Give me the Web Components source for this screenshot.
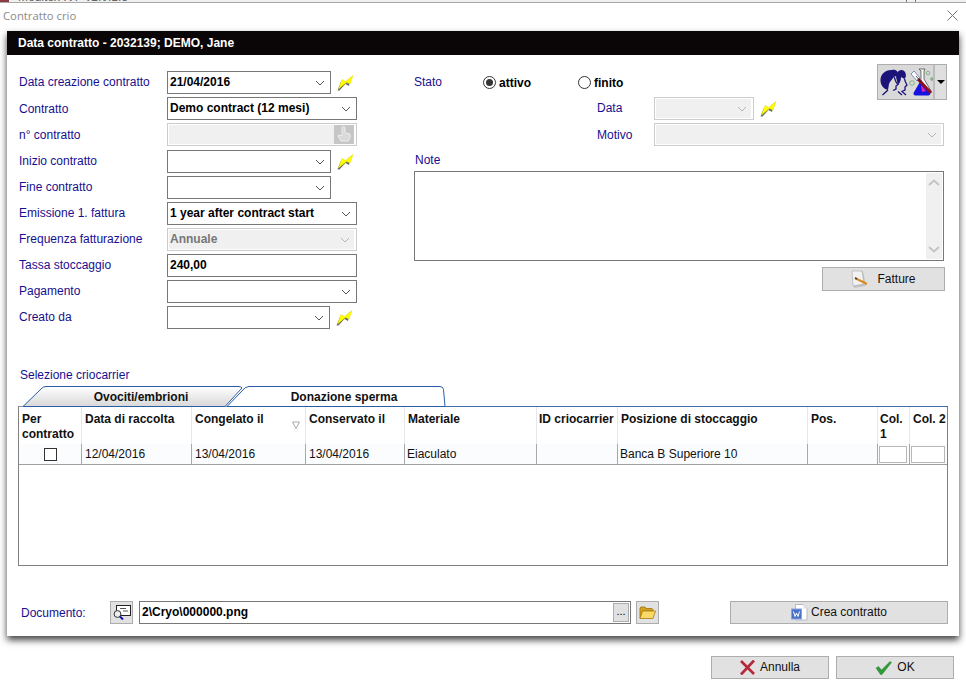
<!DOCTYPE html>
<html lang="it"><head><meta charset="utf-8"><title>Contratto crio</title>
<style>html,body{margin:0;background:#fff}body{font:12px "Liberation Sans",Arial,sans-serif}</style>
</head><body>
<crio-app></crio-app>
<script>
const ICONS={
bolt:`<svg width="17" height="16" viewBox="0 0 17 16"><path d="M0.500 15.500L4 7L7.500 9L14 2L12 11L8.500 9L2.500 15.500Z" fill="#444" opacity=".8"/><path d="M1.500 14L5 4.500L8.500 6.500L16 .5L13 9L9.500 7.500Z" fill="#ffff00" stroke="#e0d800" stroke-width=".5"/></svg>`,
people:`<svg width="56" height="36" viewBox="0 0 56 36"><g fill="#1c1478"><path d="M2.500 17C2 10 8 5.500 14 6C18 5 21 8 20 12L16 12.500C14 16 12 17 11 20L10 26C6 25 3 22 2.500 17Z"/><path d="M19 9C21 5 26 5 27.500 9C28.500 12 27.500 14 26.500 15L23 13C23 16 22 19 20 21L18 13Z"/></g>
<path d="M16 12.500L18 18L20 20.500L18 22L18 25L15 26.500M10 26L4.500 31M24 31L20 27.500M26.500 15L27.500 18L29 21L27 23L27 26L24 27.500L28 31" fill="none" stroke="#1c1478" stroke-width="1.300"/><circle cx="34" cy="19" r="2.300" fill="none" stroke="#7fb47f"/><circle cx="50" cy="9" r="1.800" fill="none" stroke="#7fb47f"/><circle cx="54" cy="15" r="1.200" fill="none" stroke="#5f9a5f"/><path fill="#fff" stroke="#333" stroke-width=".7" d="M41 5H47L46 7V15L53 27L41 27L43 15V7Z"/><path fill="#1414e0" d="M43 16L35.500 29C35 31 37 31.500 38 31.500H50C52 31.500 52.500 30 52 29L46 20Z"/><path fill="#e020c0" d="M43 21L48 27L44 28Z"/><path fill="#fff" stroke="#5577aa" stroke-width=".8" d="M33 10L36 7L42 14L39 17Z"/><path d="M40 15L53 29" stroke="#8c1020" stroke-width="3"/><path d="M38 12L43 18" stroke="#222" stroke-width=".8"/></svg>`,
paper:`<svg width="20" height="19" viewBox="0 0 20 19"><path fill="#c4c4c4" d="M2 1H12L15 16L3 18Z"/><path fill="#f2f2f2" stroke="#a8a8a8" stroke-width=".6" d="M1 1H11L13 14L2 16Z"/><path d="M4 8L16 14" stroke="#d98a20" stroke-width="2"/><path d="M4 8L6 9" stroke="#444" stroke-width="1.500"/></svg>`,
word:`<svg width="17" height="17" viewBox="0 0 17 17"><path fill="#fff" stroke="#b8b8c4" d="M4.500 .5H12L16 4.500V16H4.500Z"/><path fill="#e8e8ee" d="M12 .5V4.500H16Z"/><rect x="0.500" y="5" width="10" height="10" fill="#4a70c8" stroke="#8aa4e0"/><path d="M2.500 7.500L4 12.500L5.500 9L7 12.500L8.500 7.500" fill="none" stroke="#fff" stroke-width="1"/></svg>`,
folder:`<svg width="17" height="13" viewBox="0 0 17 13"><path fill="#d9a21c" stroke="#9a7410" stroke-width=".8" d="M1 12V2L2 1H6L7 2.500H13L14 3.500V5H4L1 12Z"/><path fill="#fbd968" stroke="#a67c12" stroke-width=".8" d="M1 12.500L3.600 5H16.500L14 12.500Z"/></svg>`,
cross:`<svg width="15" height="15" viewBox="0 0 15 15"><path d="M1 1L14 14M14 .5L1 14.500" stroke="#b4293c" stroke-width="2.700"/></svg>`,
check:`<svg width="17" height="14" viewBox="0 0 17 14"><path d="M1 7L3.500 5.500L6.500 9L15 .5L16.500 1.500L7 13.500H5.500Z" fill="#2f9a3a" stroke="#1f7a2c" stroke-width=".4"/></svg>`,
viewer:`<svg width="18" height="15" viewBox="0 0 18 15"><rect x="3.500" y=".5" width="14" height="10" fill="#fff" stroke="#222"/><path d="M7 3.500H13M10 6H15" stroke="#555"/><circle cx="4.500" cy="9" r="3.400" fill="#eee" stroke="#333"/><path d="M7 11.500L10 14.500" stroke="#1414a0" stroke-width="2"/></svg>`,
finger:`<svg width="18" height="18" viewBox="0 0 18 18"><path fill="#d8d8d8" stroke="#eeeeee" d="M7 2.500C7 1 10 1 10 2.500V8L15 9V13L13 16H6L3 11L4 10L7 11Z"/></svg>`
};
const chev=c=>`<svg width="10" height="6" viewBox="0 0 10 6"><path d="M1 1L5 5L9 1" fill="none" stroke="${c}" stroke-width="1"/></svg>`;
function reg(name,css,html){customElements.define(name,class extends HTMLElement{
  connectedCallback(){if(this.shadowRoot)return;const r=this.attachShadow({mode:'open'});
    r.innerHTML=`<style>${css}</style>`+(typeof html==='function'?html(this):html);}
});}
reg('crio-icon',':host{display:inline-flex;flex:none;align-items:center;justify-content:center}svg{display:block}',e=>ICONS[e.getAttribute('name')]);
reg('crio-label',':host{display:block;color:#170f8f;font-size:12px;line-height:14px;white-space:nowrap}','<slot></slot>');
reg('crio-combo',`:host{display:flex;align-items:center;box-sizing:border-box;height:23px;border:1px solid #777;background:#fff;color:#000;font-weight:bold;font-size:12px;padding-left:1px;padding-right:5px;flex:none;white-space:nowrap}
 :host([disabled]){border-color:#ccc;padding:1px 2px 1px 1px;color:#777}
 .i{flex:1;display:flex;align-items:center;height:100%;padding-left:1px}
 :host([disabled]) .i{background:#f0f0f0;padding-left:1px;padding-right:4px}
 span{flex:1;padding-bottom:1px}svg{display:block;margin-right:0}`,
 e=>`<div class="i"><span><slot></slot></span>${e.hasAttribute('nochev')?'':chev(e.hasAttribute('disabled')?'#b4b4b4':'#555')}</div>`);
reg('crio-radio',`:host{display:flex;align-items:center;gap:3px;font-weight:bold;color:#000;font-size:12px}
 i{box-sizing:border-box;width:13px;height:13px;border:1px solid #333;border-radius:50%;display:flex;align-items:center;justify-content:center}
 b{width:7px;height:7px;border-radius:50%;background:#333}`,
 e=>`<i>${e.hasAttribute('checked')?'<b></b>':''}</i><slot></slot>`);
reg('crio-button',`:host{display:flex;align-items:center;justify-content:center;gap:5px;box-sizing:border-box;height:23px;background:#e1e1e1;border:1px solid #adadad;color:#111;font-size:12px;flex:none;white-space:nowrap}
 ::slotted(span){margin-top:-2px}`,'<slot></slot>');
reg('crio-row',`:host{display:flex;align-items:center;height:23px;gap:6px}
 ::slotted(crio-label){width:142px}
 :host([up]) ::slotted(crio-label){margin-top:-2px}`,'<slot></slot>');
reg('crio-form-left',`:host{display:flex;flex-direction:column;gap:3px;width:407px;flex:none;box-sizing:border-box;padding:16px 0 0 12px}
 ::slotted(.gap){margin-top:1px}`,'<slot></slot>');
reg('crio-form-right',`:host{display:flex;flex-direction:column;width:534px;flex:none;padding-top:16px;position:relative}
 .r{display:flex;align-items:center;height:23px;margin-bottom:3px}
 .sub{padding-left:183px}
 .sub crio-label{width:57px}
 .st{width:69px}
 .up{margin-top:-2px}
 .att{width:95px}
 .split{margin-left:auto;margin-right:1px;margin-top:-7px;align-self:flex-start;height:36px;box-sizing:border-box;width:70px;display:flex;background:#d9d9d9;border:1px solid #adadad;flex:none}
 .split .a{width:55px;display:flex;align-items:center;justify-content:center}
 .split .b{flex:1;border-left:2px solid #bcbcbc;display:flex;align-items:center;justify-content:center;background:#dfdfdf}
 .tri{width:0;height:0;border:4px solid transparent;border-top:4px solid #000;border-bottom:0}
 .note{margin-top:4px;margin-bottom:4px;height:14px;padding-left:1px}
 .ta{box-sizing:border-box;width:530px;height:90px;border:1px solid #777;display:flex;justify-content:flex-end;padding:1px}
 .sb{width:16px;background:#f0f0f0;display:flex;flex-direction:column;justify-content:space-between;align-items:center;padding:6px 0;margin-right:0}
 .f{margin:6px 0 0 408px;width:123px;height:24px;gap:6px}
 .ct{margin-left:6px}`,
 ()=>`<div class="r"><crio-label class="st up">Stato</crio-label><crio-radio class="att" checked>attivo</crio-radio><crio-radio>finito</crio-radio>
   <div class="split"><div class="a"><crio-icon name="people"></crio-icon></div><div class="b"><div class="tri"></div></div></div></div>
  <div class="r sub"><crio-label class="up">Data</crio-label><crio-combo disabled style="width:100px"></crio-combo><crio-icon class="ct" name="bolt"></crio-icon></div>
  <div class="r sub"><crio-label>Motivo</crio-label><crio-combo disabled style="width:290px"></crio-combo></div>
  <crio-label class="note">Note</crio-label>
  <div class="ta"><div class="sb"><svg width="12" height="7" viewBox="0 0 12 7" style="transform:scaleY(-1)"><path d="M1 1L6 5.500L11 1" fill="none" stroke="#c4c4c4" stroke-width="2"/></svg><svg width="12" height="7" viewBox="0 0 12 7"><path d="M1 1L6 5.500L11 1" fill="none" stroke="#c4c4c4" stroke-width="2"/></svg></div></div>
  <crio-button class="f"><crio-icon name="paper"></crio-icon>Fatture</crio-button>`);
reg('crio-tabs',`:host{display:block;position:relative;height:20px;width:930px;z-index:1}
 svg{position:absolute;left:0;top:0}
 .t{position:relative;display:flex;height:22px;align-items:center;font-weight:bold;font-size:12px;color:#111;text-align:center}
 .a{margin-left:5px;width:236px}.b{width:170px}`,
 `<svg width="930" height="21" viewBox="0 0 930 21"><defs><linearGradient id="g" x1="0" y1="0" x2="0" y2="1"><stop offset="0" stop-color="#fff"/><stop offset="1" stop-color="#d8d8d8"/></linearGradient></defs>
 <path d="M5 20.500L23 3Q25 .5 28 .5H221Q223 .5 224 2L207 20.500Z" fill="url(#g)" stroke="#2a5ca8"/>
 <path d="M209 20.500L224 5Q227 .5 231 .5H422Q425 .5 425.500 3.500L427 20.500Z" fill="#fff" stroke="#2a5ca8"/>
 <path d="M427 20.500H930" stroke="#3f6ca8"/></svg>
 <div class="t"><span class="a">Ovociti/embrioni</span><span class="b">Donazione sperma</span></div>`);
reg('crio-table',`:host{display:block;box-sizing:border-box;width:930px;height:160px;border:1px solid #808080;border-top:0;background:#fff;color:#111;font-size:12px}
 .g{display:grid;grid-template-columns:62px 110px 114px 99px 132px 81px 190px 70px 32px 38px;grid-template-rows:37px 20px;border-bottom:1px solid #a0a0a0;border-top:1px solid #8a96a8;margin-top:0}
 .h{position:relative;box-sizing:border-box;padding:5px 0 0 3px;font-weight:bold;line-height:15px;border-left:1px solid #e6e6e6}
 .h:first-child{border-left:0;padding-left:3px}
 .h.t{padding-left:2px}
 .c{box-sizing:border-box;padding-left:3px;line-height:20px;background:#fafcfe;border-left:1px solid #a8a8a8;white-space:nowrap;display:flex;align-items:center}
 .c.l{padding-left:2px}
 .c:nth-child(11){border-left:0;justify-content:center;padding:0}
 .ck{width:13px;height:13px;box-sizing:border-box;border:1px solid #333;background:#fff;margin-left:0}
 .in{box-sizing:border-box;height:17px;border:1px solid #b8b8b8;background:#fff;flex:1;margin-right:2px}
 .c.n{padding-left:1px}
 .nw{white-space:nowrap}
 .s{position:absolute;right:5px;top:14px}`,
 ()=>{const H=['Per contratto','Data di raccolta','Congelato il','Conservato il','Materiale','ID criocarrier','Posizione di stoccaggio','Pos.','Col. 1','Col. 2'];
  const R=['','12/04/2016','13/04/2016','13/04/2016','Eiaculato','','Banca B Superiore 10','','',''];
  let s='<div class="g">';
  H.forEach((t,i)=>{s+=`<div class="h ${(i==5||i==9)?'nw':''} ${(i==5||i==8)?'t':''}">${t}${i==2?'<svg class="s" width="8" height="8" viewBox="0 0 8 8"><path d="M.5 1H7.500L4 7.500Z" fill="none" stroke="#a8a8a8"/></svg>':''}</div>`;});
  R.forEach((t,i)=>{let inner=t;if(i==0)inner='<div class="ck"></div>';if(i>=8)inner='<div class="in"></div>';s+=`<div class="c ${i>=8?'n':''} ${(i==4||i==6)?'l':''}">${inner}</div>`;});
  return s+'</div>';});
reg('crio-doc',`:host{display:flex;align-items:center;height:23px;padding-left:14px;margin-top:35px}
 crio-label{width:89px}
 .f{box-sizing:border-box;width:492px;height:23px;margin:0 5px 0 6px;border:1px solid #777;display:flex;align-items:center;padding:1px 1px 1px 2px;font-weight:bold;color:#000;justify-content:space-between}
 .f span{padding-bottom:2px}
 .d{box-sizing:border-box;width:16px;height:19px;background:#e1e1e1;border:1px solid #adadad;display:flex;align-items:center;justify-content:center;font-weight:normal;font-size:11px;padding-bottom:3px}
 .sq{width:23px}.cr{width:218px;margin-left:71px;gap:3px}`,
 `<crio-label>Documento:</crio-label><crio-button class="sq"><crio-icon name="viewer"></crio-icon></crio-button>
  <div class="f"><span>2\\Cryo\\000000.png</span><div class="d">...</div></div>
  <crio-button class="sq"><crio-icon name="folder"></crio-icon></crio-button>
  <crio-button class="cr"><crio-icon name="word"></crio-icon><span>Crea contratto</span></crio-button>`);
reg('crio-dialog',`:host{display:block;box-sizing:border-box;width:952px;height:605px;margin-left:7px;background:#fff;box-shadow:0 4px 7px rgba(0,0,0,.75)}
 .hd{height:24px;background:#0a0608;color:#fff;font-weight:bold;font-size:12px;line-height:24px;padding-left:11px}
 .form{display:flex;height:313px}
 .sel{display:block;margin-left:13px;height:14px;margin-bottom:4px}
 .tb{margin-left:11px}`,
 `<div class="hd">Data contratto - 2032139; DEMO, Jane</div>
 <div class="form"><crio-form-left>
  <crio-row up><crio-label>Data creazione contratto</crio-label><crio-combo style="width:164px">21/04/2016</crio-combo><crio-icon name="bolt"></crio-icon></crio-row>
  <crio-row><crio-label>Contratto</crio-label><crio-combo style="width:190px">Demo contract (12 mesi)</crio-combo></crio-row>
  <crio-row><crio-label>n° contratto</crio-label><crio-combo disabled nochev style="width:190px;"><div style="display:flex;justify-content:flex-end;margin-right:-4px"><div style="width:20px;height:19px;background:#c6c6c6;display:flex;align-items:center;justify-content:center;margin:1px 0"><crio-icon name="finger"></crio-icon></div></div></crio-combo></crio-row>
  <crio-row class="gap" up><crio-label>Inizio contratto</crio-label><crio-combo style="width:164px"></crio-combo><crio-icon name="bolt"></crio-icon></crio-row>
  <crio-row up><crio-label>Fine contratto</crio-label><crio-combo style="width:164px"></crio-combo></crio-row>
  <crio-row up><crio-label>Emissione 1. fattura</crio-label><crio-combo style="width:190px">1 year after contract start</crio-combo></crio-row>
  <crio-row up><crio-label>Frequenza fatturazione</crio-label><crio-combo disabled style="width:190px">Annuale</crio-combo></crio-row>
  <crio-row up><crio-label>Tassa stoccaggio</crio-label><crio-combo nochev style="width:190px">240,00</crio-combo></crio-row>
  <crio-row up><crio-label>Pagamento</crio-label><crio-combo style="width:190px"></crio-combo></crio-row>
  <crio-row up><crio-label>Creato da</crio-label><crio-combo style="width:163px"></crio-combo><crio-icon name="bolt"></crio-icon></crio-row>
 </crio-form-left><crio-form-right></crio-form-right></div>
 <crio-label class="sel">Selezione criocarrier</crio-label>
 <crio-tabs class="tb"></crio-tabs>
 <crio-table class="tb"></crio-table>
 <crio-doc></crio-doc>`);
reg('crio-titlebar',`:host{display:block}
 .top{height:3px;box-sizing:border-box;border-bottom:1px solid #a8a8a8;overflow:hidden;display:flex;color:#666;font-size:12px;line-height:12px;background:#f0f0f0}
 .top i{width:9px;height:2px;background:#8c3a44;flex:none}
 .top span{margin:-9px 0 0 9px;white-space:nowrap;flex:1}
 .top b{width:1px;height:2px;background:#777;flex:none;margin-right:8px}
 .top b+b{margin-right:50px}
 .t{display:flex;justify-content:space-between;align-items:center;box-sizing:border-box;height:28px;padding:0 8px 4px 3px;color:#8a8a8a;font:11.3px "Open Sans","Liberation Sans",sans-serif}
 svg{display:block}`,
 `<div class="top"><i></i><span>Meditex IVF v2.0.1.3</span><b></b><b></b></div>
  <div class="t"><span>Contratto crio</span><svg width="11" height="11" viewBox="0 0 11 11"><path d="M.5 .5L10.500 10.500M10.500 .5L.5 10.500" stroke="#777" stroke-width="1"/></svg></div>`);
reg('crio-app',`:host{display:block;width:966px;height:689px;overflow:hidden;position:relative}
 .ft{display:flex;justify-content:flex-end;gap:7px;padding:20px 12px 0 0}
 crio-button{width:118px}`,
 `<crio-titlebar></crio-titlebar><crio-dialog></crio-dialog>
 <div class="ft"><crio-button><crio-icon name="cross"></crio-icon><span>Annulla</span></crio-button><crio-button><crio-icon name="check"></crio-icon><span>OK</span></crio-button></div>`);
</script></body></html>
